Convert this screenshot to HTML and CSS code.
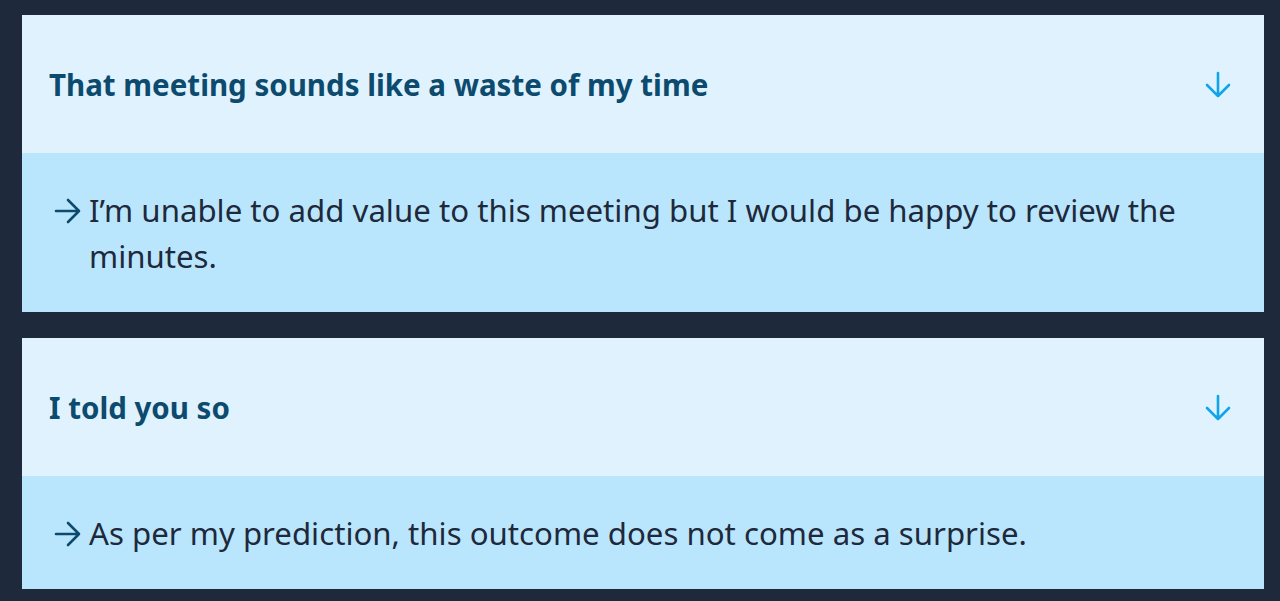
FILE: index.html
```html
<!DOCTYPE html>
<html lang="en">
<head>
<meta charset="utf-8">
<link rel="stylesheet" href="styles.css">
</head>
<body>
<div class="list">
  <section class="card">
    <div class="head">
      <h2 class="title">That meeting sounds like a waste of my time</h2>
      <svg class="chev" viewBox="0 0 28 28" width="28" height="28"><path d="M14 2v23M3 14l11 11 11-11" fill="none" stroke="currentColor" stroke-width="2.6" stroke-linecap="round" stroke-linejoin="round"/></svg>
    </div>
    <div class="body">
      <svg class="arr" viewBox="0 0 28 28" width="28" height="28"><path d="M2 14h23M14 3l11 11-11 11" fill="none" stroke="currentColor" stroke-width="2.6" stroke-linecap="round" stroke-linejoin="round"/></svg>
      <p class="text">I’m unable to add value to this meeting but I would be happy to review the minutes.</p>
    </div>
  </section>
  <section class="card">
    <div class="head">
      <h2 class="title">I told you so</h2>
      <svg class="chev" viewBox="0 0 28 28" width="28" height="28"><path d="M14 2v23M3 14l11 11 11-11" fill="none" stroke="currentColor" stroke-width="2.6" stroke-linecap="round" stroke-linejoin="round"/></svg>
    </div>
    <div class="body">
      <svg class="arr" viewBox="0 0 28 28" width="28" height="28"><path d="M2 14h23M14 3l11 11-11 11" fill="none" stroke="currentColor" stroke-width="2.6" stroke-linecap="round" stroke-linejoin="round"/></svg>
      <p class="text">As per my prediction, this outcome does not come as a surprise.</p>
    </div>
  </section>
</div>
</body>
</html>
```
FILE: styles.css
```css
html, body {
  margin: 0;
  background: #1e293b;
  height: 601px;
  overflow: hidden;
}
body {
  font-family: "Noto Sans", "Open Sans", sans-serif;
}
.list {
  display: flex;
  flex-direction: column;
  gap: 26px;
  padding: 15px 16px 0 22px;
}
.head {
  background: #e0f2fe;
  height: 138px;
  display: flex;
  align-items: center;
  justify-content: space-between;
  padding: 0 32px 0 27px;
}
.title {
  margin: 0;
  color: #0c4a6e;
  font-size: 29.5px;
  font-weight: 700;
}
.chev {
  color: #0ea5e9;
  margin-top: 2px;
}
.body {
  background: #bae6fd;
  display: flex;
  align-items: flex-start;
  padding: 34px 40px 33px 32px;
}
.arr {
  color: #0c4a6e;
  flex: none;
  margin: 10px 7px 0 0;
}
.text {
  margin: 0;
  color: #1e293b;
  font-size: 31.2px;
  line-height: 46px;
}
```
